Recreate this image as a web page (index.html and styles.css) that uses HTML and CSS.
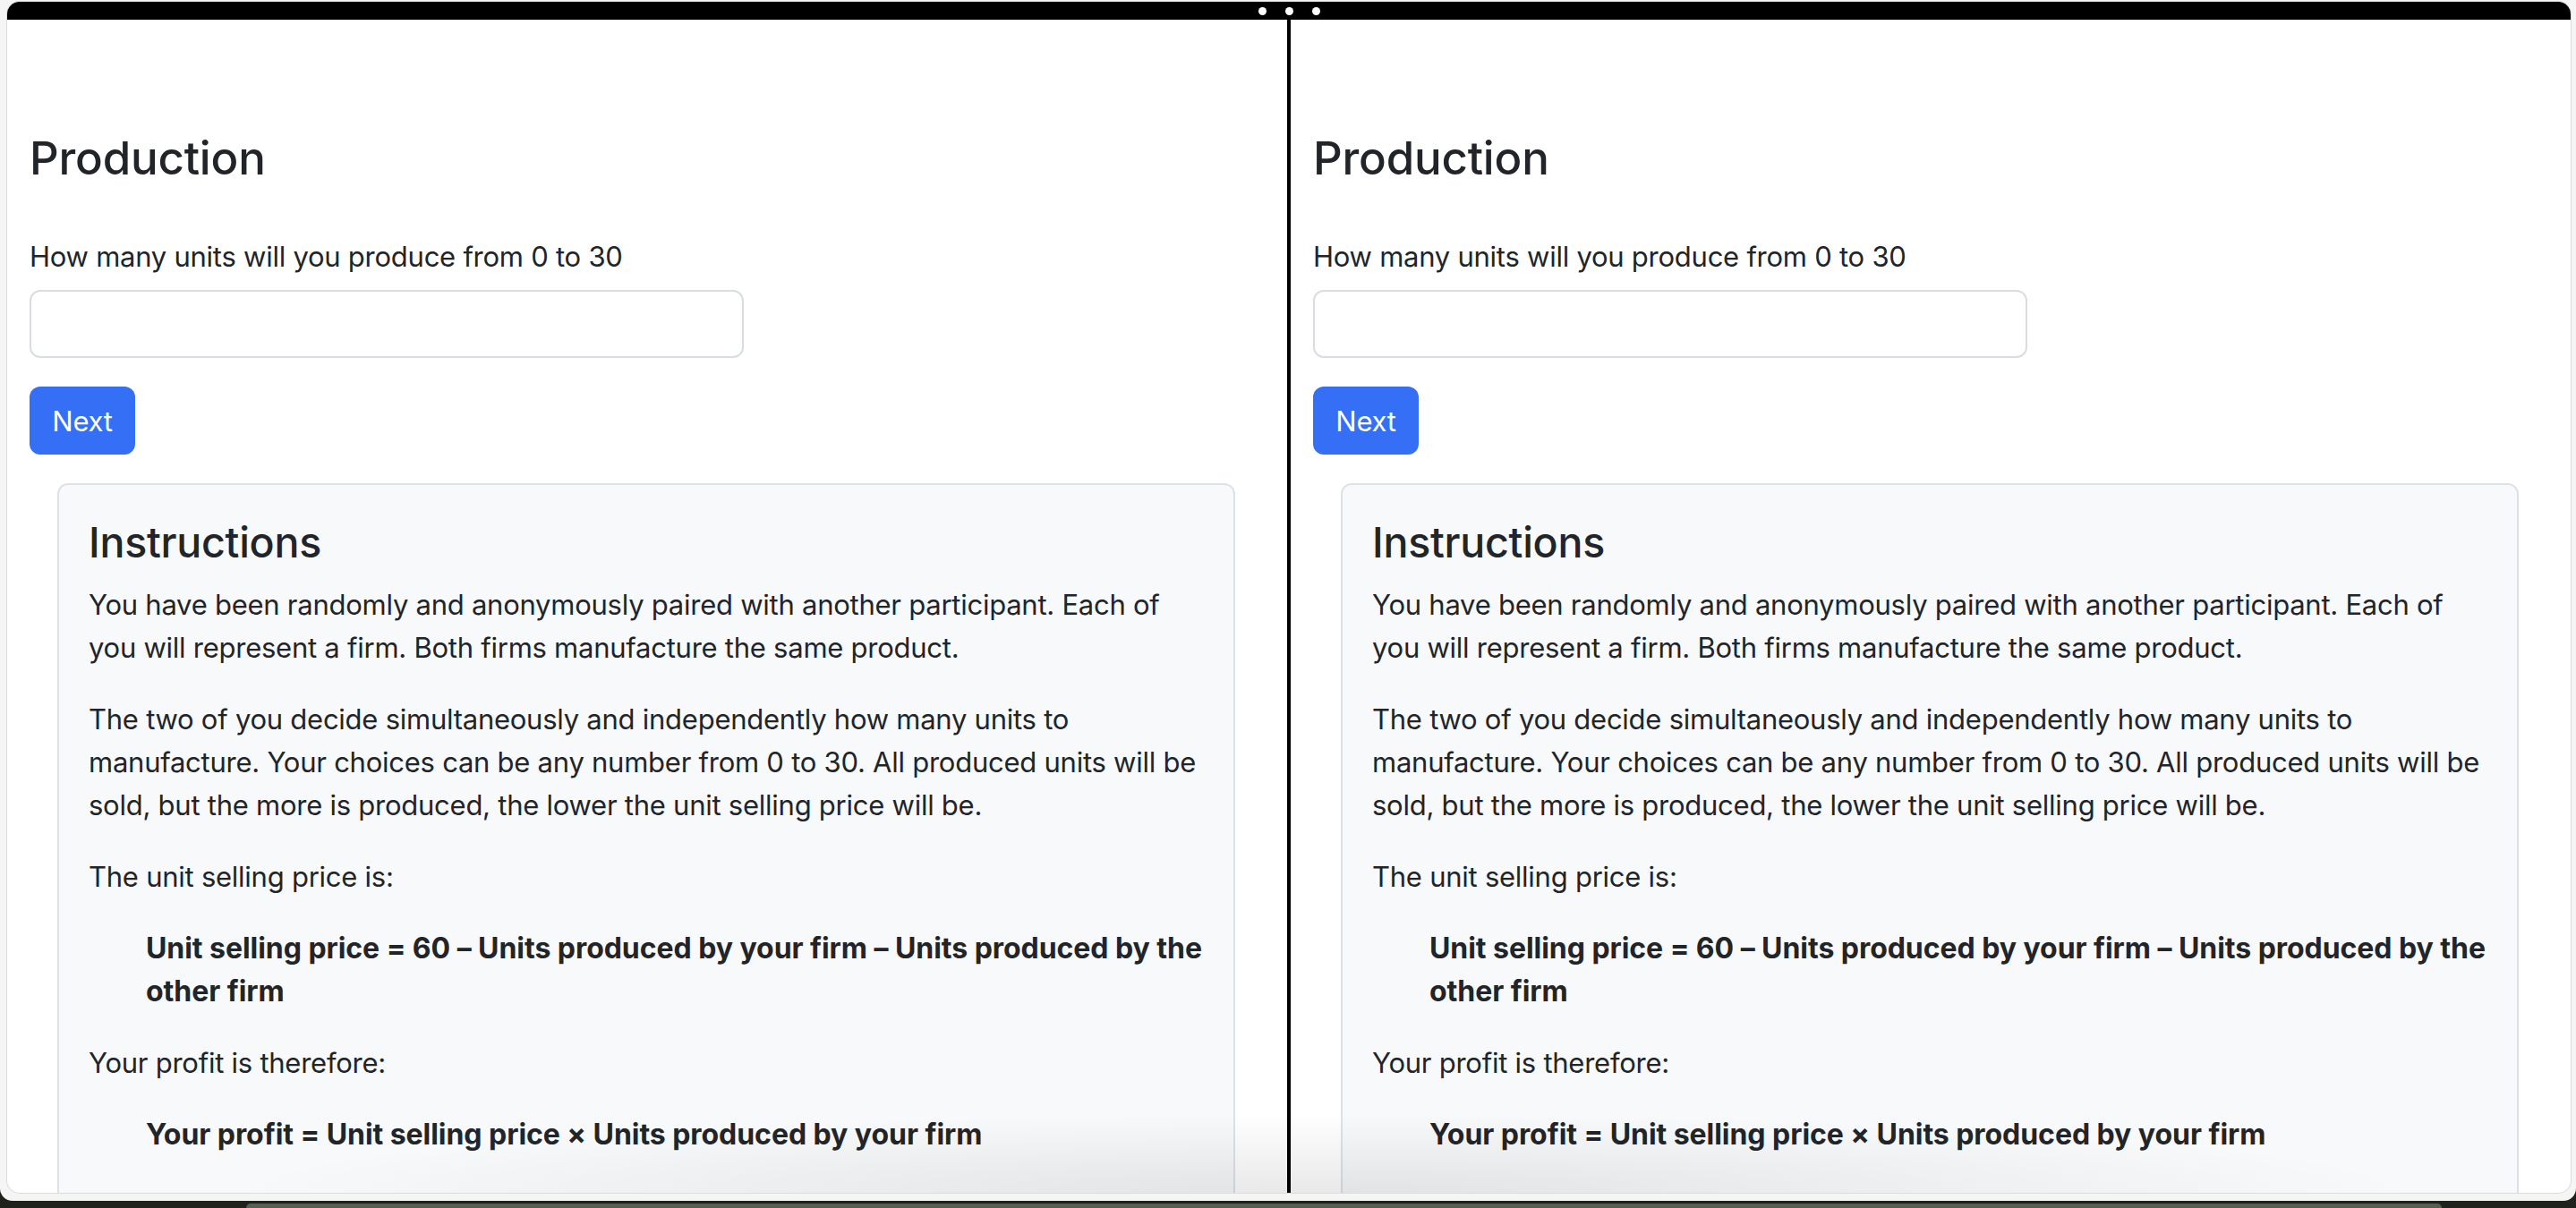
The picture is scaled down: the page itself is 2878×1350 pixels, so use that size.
FILE: index.html
```html
<!DOCTYPE html>
<html lang="en">
<head>
<meta charset="utf-8">
<title>Production</title>
<link rel="stylesheet" href="styles.css">
</head>
<body>
<div class="screen">
  <div class="frame">
    <div class="window">
      <div class="titlebar">
        <span class="dot"></span><span class="dot"></span><span class="dot"></span>
      </div>
      <div class="panes">
        <section class="pane">
          <h2 class="page-title">Production</h2>
          <label class="field-label" for="units-a">How many units will you produce from 0 to 30</label>
          <input class="field-input" id="units-a" type="text">
          <button class="btn-next" type="button">Next</button>
          <div class="card">
            <h3 class="card-title">Instructions</h3>
            <p>You have been randomly and anonymously paired with another participant. Each of you will represent a firm. Both firms manufacture the same product.</p>
            <p>The two of you decide simultaneously and independently how many units to manufacture. Your choices can be any number from 0 to 30. All produced units will be sold, but the more is produced, the lower the unit selling price will be.</p>
            <p>The unit selling price is:</p>
            <p class="formula">Unit selling price = 60 – Units produced by your firm – Units produced by the other firm</p>
            <p>Your profit is therefore:</p>
            <p class="formula">Your profit = Unit selling price × Units produced by your firm</p>
          </div>
        </section>
        <div class="divider"></div>
        <section class="pane">
          <h2 class="page-title">Production</h2>
          <label class="field-label" for="units-b">How many units will you produce from 0 to 30</label>
          <input class="field-input" id="units-b" type="text">
          <button class="btn-next" type="button">Next</button>
          <div class="card">
            <h3 class="card-title">Instructions</h3>
            <p>You have been randomly and anonymously paired with another participant. Each of you will represent a firm. Both firms manufacture the same product.</p>
            <p>The two of you decide simultaneously and independently how many units to manufacture. Your choices can be any number from 0 to 30. All produced units will be sold, but the more is produced, the lower the unit selling price will be.</p>
            <p>The unit selling price is:</p>
            <p class="formula">Unit selling price = 60 – Units produced by your firm – Units produced by the other firm</p>
            <p>Your profit is therefore:</p>
            <p class="formula">Your profit = Unit selling price × Units produced by your firm</p>
          </div>
        </section>
      </div>
      <div class="dock-shadow"></div>
    </div>
  </div>
  <div class="desktop"><div class="desktop-band"></div></div>
</div>
</body>
</html>
```
FILE: styles.css
```css
html, body {
  margin: 0;
  padding: 0;
}

body {
  background: #1e2219;
  font-family: Inter, "Noto Sans", "Liberation Sans", sans-serif;
  font-size: 31px;
  letter-spacing: -0.25px;
  color: #212529;
}

.screen {
  width: 2878px;
  height: 1350px;
  display: flex;
  flex-direction: column;
  overflow: hidden;
}

.frame {
  height: 1342px;
  flex: none;
  box-sizing: border-box;
  padding: 2px 6px 9px 8px;
  background: #f5f5f5;
  border-radius: 0 0 14px 14px;
  display: flex;
}

.window {
  flex: 1;
  position: relative;
  display: flex;
  flex-direction: column;
  background: #fff;
  border-radius: 14px;
  overflow: hidden;
  box-shadow: 0 0 0 1px #dcdcdc;
}

.titlebar {
  height: 20px;
  flex: none;
  background: #000;
  display: flex;
  justify-content: center;
  align-items: center;
  gap: 21px;
}

.dot {
  width: 9px;
  height: 9px;
  border-radius: 50%;
  background: #fff;
}

.panes {
  flex: 1;
  min-height: 0;
  display: flex;
}

.pane {
  width: 1430px;
  flex: none;
  box-sizing: border-box;
  padding: 121px 25px 0;
  overflow: hidden;
}

.pane:last-child {
  flex: 1;
  width: auto;
}

.divider {
  width: 4px;
  flex: none;
  background: #000;
}

.page-title {
  margin: 0 0 53px;
  font-size: 51px;
  font-weight: 500;
  line-height: 67px;
  letter-spacing: -0.2px;
}

.field-label {
  display: block;
  line-height: 48px;
  margin-bottom: 13px;
}

.field-input {
  display: block;
  width: 798px;
  height: 76px;
  box-sizing: border-box;
  margin: 0;
  border: 2px solid #d9dde1;
  border-radius: 12px;
  background: #fff;
  font: inherit;
}

.btn-next {
  display: block;
  margin-top: 32px;
  height: 76px;
  width: 118px;
  padding: 0;
  border: none;
  border-radius: 12px;
  background: #346ff5;
  color: #fff;
  font-family: inherit;
  font-size: 31px;
  letter-spacing: inherit;
  font-weight: 400;
}

.card {
  margin: 32px 0 0 31px;
  width: 1316px;
  box-sizing: border-box;
  padding: 36px 32px 32px 33px;
  border: 2px solid #dee2e6;
  border-radius: 12px;
  background: #f8f9fa;
}

.card-title {
  margin: 0 0 16px;
  font-size: 46.5px;
  font-weight: 500;
  line-height: 57.6px;
}

.card p {
  margin: 0 0 32px;
  line-height: 48px;
}

.card .formula {
  padding-left: 64px;
  margin-right: -20px;
  font-size: 32px;
  letter-spacing: -0.05px;
  font-weight: 700;
}

.dock-shadow {
  position: absolute;
  left: 230px;
  right: 150px;
  bottom: 0;
  height: 90px;
  background: radial-gradient(ellipse at 50% 100%, rgba(0, 0, 0, 0.09), rgba(0, 0, 0, 0) 70%);
  pointer-events: none;
}

.desktop {
  flex: 1;
  position: relative;
  background: #1f231c;
}

.desktop-band {
  position: absolute;
  left: 275px;
  right: 150px;
  top: 3px;
  bottom: 0;
  border-radius: 10px 10px 0 0;
  background: #55604e;
}
```
